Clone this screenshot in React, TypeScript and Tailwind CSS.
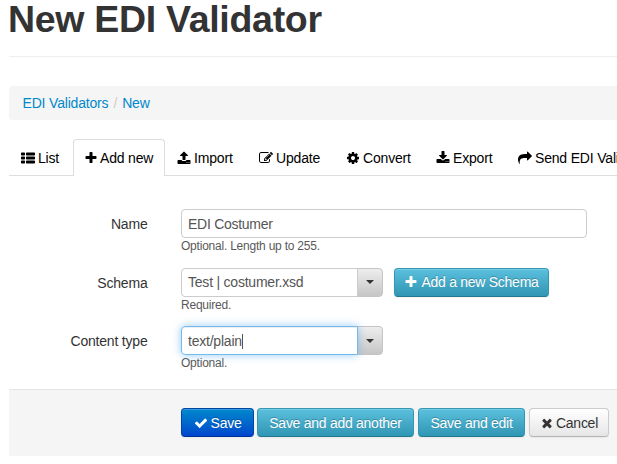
import type { ReactNode } from "react";

const icons = {
  list: "M96 192h320q96 0 96 96v192q0 96-96 96H96q-96 0-96-96V288q0-96 96-96zM736 192h960q96 0 96 96v192q0 96-96 96H736q-96 0-96-96V288q0-96 96-96zM96 704h320q96 0 96 96v192q0 96-96 96H96q-96 0-96-96V800q0-96 96-96zM736 704h960q96 0 96 96v192q0 96-96 96H736q-96 0-96-96V800q0-96 96-96zM96 1216h320q96 0 96 96v192q0 96-96 96H96q-96 0-96-96v-192q0-96 96-96zM736 1216h960q96 0 96 96v192q0 96-96 96H736q-96 0-96-96v-192q0-96 96-96z",
  plus: "M1600 736v192q0 40-28 68t-68 28h-416v416q0 40-28 68t-68 28h-192q-40 0-68-28t-28-68v-416h-416q-40 0-68-28t-28-68v-192q0-40 28-68t68-28h416v-416q0-40 28-68t68-28h192q40 0 68 28t28 68v416h416q40 0 68 28t28 68z",
  upload:
    "M1344 1472q0-26-19-45t-45-19-45 19-19 45 19 45 45 19 45-19 19-45zm256 0q0-26-19-45t-45-19-45 19-19 45 19 45 45 19 45-19 19-45zm128-224v320q0 40-28 68t-68 28h-1472q-40 0-68-28t-28-68v-320q0-40 28-68t68-28h427q21 56 70.5 92t110.5 36h256q61 0 110.5-36t70.5-92h427q40 0 68 28t28 68zm-325-648q-17 40-59 40h-256v448q0 26-19 45t-45 19h-256q-26 0-45-19t-19-45v-448h-256q-42 0-59-40-17-39 14-69l448-448q18-19 45-19t45 19l448 448q31 30 14 69z",
  edit: "M888 1184l116-116-152-152-116 116v56h96v96h56zm440-720q-16-16-33 1l-350 350q-17 17-1 33t33-1l350-350q17-17 1-33zm80 594v190q0 119-84.5 203.5t-203.5 84.5h-832q-119 0-203.5-84.5t-84.5-203.5v-832q0-119 84.5-203.5t203.5-84.5h832q63 0 117 25 15 7 18 23 3 17-9 29l-49 49q-14 14-32 8-23-6-45-6h-832q-66 0-113 47t-47 113v832q0 66 47 113t113 47h832q66 0 113-47t47-113v-126q0-13 9-22l64-64q15-15 35-7t20 29zm-96-738l288 288-672 672h-288v-288zm444 132l-92 92-288-288 92-92q28-28 68-28t68 28l152 152q28 28 28 68t-28 68z",
  cog: "M1152 896q0-106-75-181t-181-75-181 75-75 181 75 181 181 75 181-75 75-181zm512-109v222q0 12-8 23t-20 13l-185 28q-19 54-39 91 35 50 107 138 10 12 10 25t-9 23q-27 37-99 108t-94 71q-12 0-26-9l-138-108q-44 23-91 38-16 136-29 186-7 28-36 28h-222q-14 0-24.5-8.5t-11.5-21.5l-28-184q-49-16-90-37l-141 107q-10 9-25 9-14 0-25-11-126-114-165-168-7-10-7-23 0-12 8-23 15-21 51-66.5t54-70.5q-27-50-41-99l-183-27q-13-2-21-12.5t-8-23.5v-222q0-12 8-23t19-13l186-28q14-46 39-92-40-57-107-138-10-12-10-24 0-10 9-23 26-36 98.5-107.5t94.5-71.5q13 0 26 10l138 107q44-23 91-38 16-136 29-186 7-28 36-28h222q14 0 24.5 8.5t11.5 21.5l28 184q49 16 90 37l142-107q9-9 24-9 13 0 25 10 129 119 165 170 7 8 7 22 0 12-8 23-15 21-51 66.5t-54 70.5q26 50 41 98l183 28q13 2 21 12.5t8 23.5z",
  download:
    "M1344 1344q0-26-19-45t-45-19-45 19-19 45 19 45 45 19 45-19 19-45zm256 0q0-26-19-45t-45-19-45 19-19 45 19 45 45 19 45-19 19-45zm128-224v320q0 40-28 68t-68 28h-1472q-40 0-68-28t-28-68v-320q0-40 28-68t68-28h465l135 136q58 56 136 56t136-56l136-136h464q40 0 68 28t28 68zm-325-569q17 41-14 70l-448 448q-18 19-45 19t-45-19l-448-448q-31-29-14-70 17-39 59-39h256v-448q0-26 19-45t45-19h256q26 0 45 19t19 45v448h256q42 0 59 39z",
  share:
    "M1792 640q0 26-19 45l-512 512q-19 19-45 19t-45-19-19-45v-256h-224q-98 0-175.5 6t-154 21.5-133 42.5-105.5 69.5-80 101-48.5 138.5-17.5 181q0 55 5 123 0 6 2.5 23.5t2.5 26.5q0 15-8.5 25t-23.5 10q-16 0-28-17-7-9-13-22t-13.5-30-10.5-24q-127-285-127-451 0-199 53-333 162-403 875-403h224v-256q0-26 19-45t45-19 45 19l512 512q19 19 19 45z",
  check:
    "M1671 566q0 40-28 68l-724 724-136 136q-28 28-68 28t-68-28l-136-136-362-362q-28-28-28-68t28-68l136-136q28-28 68-28t68 28l294 295 656-657q28-28 68-28t68 28l136 136q28 28 28 68z",
  times:
    "M1490 1322q0 40-28 68l-136 136q-28 28-68 28t-68-28l-294-294-294 294q-28 28-68 28t-68-28l-136-136q-28-28-28-68t28-68l294-294-294-294q-28-28-28-68t28-68l136-136q28-28 68-28t68 28l294 294 294-294q28-28 68-28t68 28l136 136q28 28 28 68t-28 68l-294 294 294 294q28 28 28 68z",
};

function Icon({ name, className = "" }: { name: keyof typeof icons; className?: string }) {
  return (
    <svg viewBox="0 0 1792 1792" fill="currentColor" className={`size-[14px] shrink-0 ${className}`}>
      <path d={icons[name]} />
    </svg>
  );
}

const tabs: { label: string; icon: keyof typeof icons; width: string; active?: boolean }[] = [
  { label: "List", icon: "list", width: "w-[64px]" },
  { label: "Add new", icon: "plus", width: "w-[92px]", active: true },
  { label: "Import", icon: "upload", width: "w-[82px]" },
  { label: "Update", icon: "edit", width: "w-[87px]" },
  { label: "Convert", icon: "cog", width: "w-[90px]" },
  { label: "Export", icon: "download", width: "w-[82px]" },
  { label: "Send EDI Validator", icon: "share", width: "w-[160px]" },
];

function Button({ tone, className, children }: { tone: "blue" | "teal" | "plain"; className: string; children: ReactNode }) {
  const tones = {
    blue: "border-[#0044a8] border-b-[#003399] bg-linear-to-b from-[#0088cc] to-[#0044cc] text-white [text-shadow:0_-1px_0_rgba(0,0,0,0.25)]",
    teal: "border-[#3498b4] border-b-[#24778e] bg-linear-to-b from-[#5bc0de] to-[#2f96b4] text-white [text-shadow:0_-1px_0_rgba(0,0,0,0.25)]",
    plain: "border-[#cccccc] border-b-[#b3b3b3] bg-linear-to-b from-white to-[#e6e6e6] text-[#333333]",
  };
  return (
    <button
      className={`flex h-[29px] shrink-0 items-center justify-center gap-[3px] rounded-[4px] border pt-px tracking-[-0.27px] whitespace-nowrap shadow-[inset_0_1px_0_rgba(255,255,255,0.2),0_1px_2px_rgba(0,0,0,0.05)] ${tones[tone]} ${className}`}
    >
      {children}
    </button>
  );
}

function Field({ label, hint, children }: { label: string; hint: string; children: ReactNode }) {
  return (
    <div className="flex h-[58.5px]">
      <div className="w-[138.5px] pt-[5px] text-right leading-[20px] tracking-[-0.2px] text-[#333333]">{label}</div>
      <div className="ml-[33.5px]">
        <div className="flex h-[29px]">{children}</div>
        <div className="text-[12px] leading-[17px] tracking-[-0.22px] text-[#595959]">{hint}</div>
      </div>
    </div>
  );
}

function Combo({ value, focused }: { value: string; focused?: boolean }) {
  return (
    <div className="flex tracking-[-0.22px]">
      <div
        className={`z-10 flex w-[177px] items-center rounded-l-[4px] border pt-px pl-[6px] text-[#555555] ${
          focused ? "border-[#74b9ef] shadow-[inset_0_1px_1px_rgba(0,0,0,0.075),0_0_8px_rgba(82,168,236,0.6)]" : "border-[#cccccc]"
        }`}
      >
        {value}
        {focused && <span className="h-[15px] w-px bg-[#555555]" />}
      </div>
      <div className="-ml-px flex w-[26px] items-center justify-center rounded-r-[4px] border border-[#c4c4c4] bg-linear-to-b from-[#eeeeee] to-[#c6c6c6]">
        <span className="border-x-4 border-t-4 border-x-transparent border-t-[#333333]" />
      </div>
    </div>
  );
}

export default function App() {
  return (
    <div className="h-[464px] w-[617px] overflow-hidden bg-white pl-[9px] font-['Liberation_Sans',Arial,sans-serif] text-[14px] tracking-[-0.18px]">
      <h1 className="-ml-px h-[56px] text-[37.5px] leading-[38px] font-bold tracking-[-0.3px] whitespace-nowrap text-[#333333]">
        New EDI Validator
      </h1>
      <div className="h-px bg-[#eeeeee]" />
      <nav className="mt-[29px] flex h-[34px] items-center rounded-l-[4px] bg-[#f5f5f5] pl-[13.5px] text-[#0088cc]">
        <a>EDI Validators</a>
        <span className="mx-[5px] text-[#cccccc]">/</span>
        <a>New</a>
      </nav>
      <div className="mt-[19px] flex h-[37px] border-b border-[#dddddd] text-black">
        {tabs.map((tab) => (
          <div
            key={tab.label}
            className={`flex h-[37px] shrink-0 items-center gap-[3px] rounded-t-[4px] pl-[11px] whitespace-nowrap ${tab.width} ${
              tab.active ? "border border-b-0 border-[#dddddd] bg-white" : "border border-b-0 border-transparent"
            }`}
          >
            <Icon name={tab.icon} className={tab.active ? "-mr-px mb-px -ml-px" : "mb-px"} />
            {tab.label}
          </div>
        ))}
      </div>
      <div className="mt-[33px] h-[180px]">
        <Field label="Name" hint="Optional. Length up to 255.">
          <div className="flex w-[406px] items-center rounded-[4px] border border-[#cccccc] pt-px pl-[6px] tracking-[-0.27px] text-[#555555]">
            EDI Costumer
          </div>
        </Field>
        <Field label="Schema" hint="Required.">
          <Combo value="Test | costumer.xsd" />
          <Button tone="teal" className="ml-[11px] w-[155px]">
            <Icon name="plus" className="mb-px" />
            Add a new Schema
          </Button>
        </Field>
        <Field label="Content type" hint="Optional.">
          <Combo value="text/plain" focused />
        </Field>
      </div>
      <div className="flex h-[67px] gap-[4px] border-t border-[#e5e5e5] bg-[#f5f5f5] pt-[18px] pl-[172px]">
        <Button tone="blue" className="w-[73px]">
          <Icon name="check" className="mb-px" />
          Save
        </Button>
        <Button tone="teal" className="-ml-px w-[157px]">Save and add another</Button>
        <Button tone="teal" className="w-[107px]">Save and edit</Button>
        <Button tone="plain" className="w-[80px]">
          <Icon name="times" className="-mr-px mb-px" />
          Cancel
        </Button>
      </div>
    </div>
  );
}
